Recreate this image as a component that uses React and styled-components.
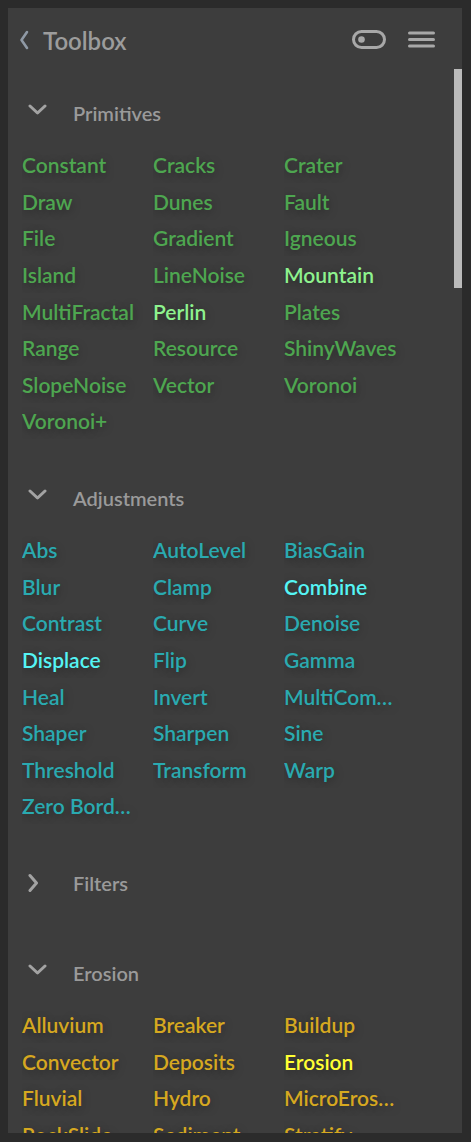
import React from "react";
import styled, { createGlobalStyle } from "styled-components";

const Global = createGlobalStyle`
  html, body { margin: 0; padding: 0; background: #2b2b2b; }
  body { font-family: Lato, "Noto Sans", sans-serif; }
  * { box-sizing: border-box; }
`;

const Page = styled.div`
  padding: 8px 9px 0 8px;
  height: 1142px;
  overflow: hidden;
`;

const Panel = styled.div`
  width: 454px;
  height: 1125px;
  background: #3d3d3d;
  display: flex;
  flex-direction: column;
  overflow: hidden;
`;

const Header = styled.div`
  height: 61px;
  flex: none;
  display: flex;
  align-items: center;
  padding: 3px 27px 0 11px;
`;

const Title = styled.div`
  margin-left: 14px;
  font-size: 24px;
  font-weight: 600;
  color: #9c9c9c;
  flex: 1;
`;

const Tools = styled.div`
  display: flex;
  align-items: center;
  gap: 21px;
`;

const Scroll = styled.div`
  position: relative;
  flex: 1;
  overflow: hidden;
  padding-top: 24px;
`;

const Thumb = styled.div`
  position: absolute;
  right: 0;
  top: 0;
  width: 8px;
  height: 219px;
  background: #bbbbbb;
`;

const Section = styled.section`
  padding-bottom: ${(p) => (p.$open ? "38.5px" : "50px")};
`;

const SectionHead = styled.div`
  height: 40px;
  display: flex;
  align-items: center;
  padding-left: 20px;
  gap: 25px;
  font-size: 20px;
  font-weight: 600;
  color: #9a9a9a;
`;

const Grid = styled.div`
  margin-top: 14px;
  padding-left: 14px;
  display: grid;
  grid-template-columns: repeat(3, 131px);
  grid-auto-rows: 36.57px;
  align-items: center;
`;

const Item = styled.div`
  padding-right: 17px;
  font-size: 21px;
  font-weight: 600;
  white-space: nowrap;
  overflow: hidden;
  text-overflow: ellipsis;
  line-height: 36px;
  color: ${(p) => (p.$hot ? p.$bright : p.$tone)};
  text-shadow: 0 2px 10px rgba(0, 0, 0, 0.35);
`;

const ChevronDown = () => (
  <svg width="20" height="20" viewBox="0 0 20 20" style={{ flex: "none" }}>
    <polyline points="2,3 9.5,10 17,3" fill="none" stroke="#a3a3a3" strokeWidth="3" strokeLinecap="round" strokeLinejoin="round" />
  </svg>
);

const ChevronRight = () => (
  <svg width="20" height="20" viewBox="0 0 20 20" style={{ flex: "none" }}>
    <polyline points="2,2.5 8.5,10 2,17.5" fill="none" stroke="#a3a3a3" strokeWidth="3" strokeLinecap="round" strokeLinejoin="round" />
  </svg>
);

const BackChevron = () => (
  <svg width="10" height="20" viewBox="0 0 10 20">
    <polyline points="8,2 2.5,10 8,18" fill="none" stroke="#8f99a5" strokeWidth="2.6" strokeLinecap="round" strokeLinejoin="round" />
  </svg>
);

const ToggleIcon = () => (
  <svg width="36" height="20" viewBox="0 0 36 20">
    <rect x="2.5" y="1.5" width="31" height="16" rx="8" fill="none" stroke="#a8a8a8" strokeWidth="3" />
    <circle cx="10.5" cy="9.5" r="3.3" fill="#a8a8a8" />
  </svg>
);

const MenuIcon = () => (
  <svg width="27" height="20" viewBox="0 0 27 20">
    <g stroke="#a8a8a8" strokeWidth="3" strokeLinecap="round">
      <line x1="1.5" y1="3" x2="25.5" y2="3" />
      <line x1="1.5" y1="9.5" x2="25.5" y2="9.5" />
      <line x1="1.5" y1="16" x2="25.5" y2="16" />
    </g>
  </svg>
);

const sections = [
  {
    name: "Primitives",
    open: true,
    tone: "#4ea650",
    bright: "#8ef28e",
    items: ["Constant", "Cracks", "Crater", "Draw", "Dunes", "Fault", "File", "Gradient", "Igneous", "Island", "LineNoise", "Mountain", "MultiFractal", "Perlin", "Plates", "Range", "Resource", "ShinyWaves", "SlopeNoise", "Vector", "Voronoi", "Voronoi+"],
    hot: ["Mountain", "Perlin"],
  },
  {
    name: "Adjustments",
    open: true,
    tone: "#2aaab0",
    bright: "#55f4f4",
    items: ["Abs", "AutoLevel", "BiasGain", "Blur", "Clamp", "Combine", "Contrast", "Curve", "Denoise", "Displace", "Flip", "Gamma", "Heal", "Invert", "MultiCombiner", "Shaper", "Sharpen", "Sine", "Threshold", "Transform", "Warp", "Zero Bord…"],
    hot: ["Combine", "Displace"],
  },
  { name: "Filters", open: false, items: [] },
  {
    name: "Erosion",
    open: true,
    tone: "#d6a820",
    bright: "#ffff33",
    items: ["Alluvium", "Breaker", "Buildup", "Convector", "Deposits", "Erosion", "Fluvial", "Hydro", "MicroErosion", "RockSlide", "Sediment", "Stratify", "Thermal", "Wizard", "Wizard2"],
    hot: ["Erosion"],
  },
];

export default function App() {
  return (
    <Page>
      <Global />
      <Panel>
        <Header>
          <BackChevron />
          <Title>Toolbox</Title>
          <Tools>
            <ToggleIcon />
            <MenuIcon />
          </Tools>
        </Header>
        <Scroll>
          <Thumb />
          {sections.map((s) => (
            <Section key={s.name} $open={s.open}>
              <SectionHead>
                {s.open ? <ChevronDown /> : <ChevronRight />}
                <span>{s.name}</span>
              </SectionHead>
              {s.open && (
                <Grid>
                  {s.items.map((it) => (
                    <Item key={it} $tone={s.tone} $bright={s.bright} $hot={s.hot.includes(it)}>
                      {it}
                    </Item>
                  ))}
                </Grid>
              )}
            </Section>
          ))}
        </Scroll>
      </Panel>
    </Page>
  );
}
